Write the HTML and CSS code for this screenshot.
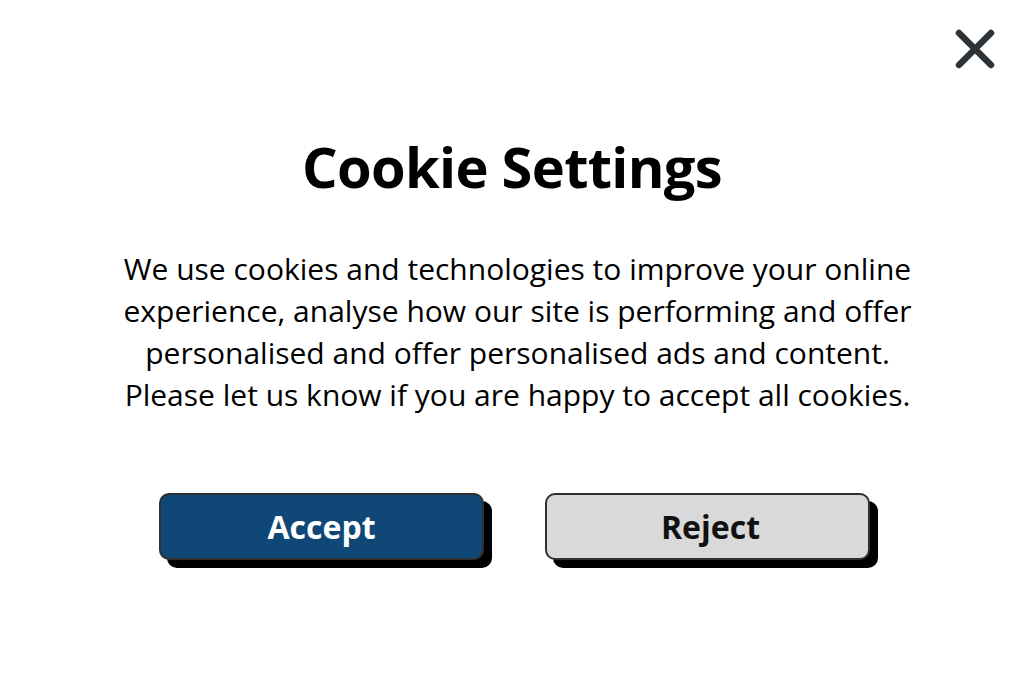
FILE: index.html
```html
<!DOCTYPE html>
<html lang="en">
<head>
<meta charset="utf-8">
<title>Cookie Settings</title>
<link rel="stylesheet" href="styles.css">
</head>
<body>
<div class="dialog">
  <button class="close" aria-label="Close">
    <svg width="40" height="40" viewBox="0 0 40 40"><path d="M4 4 L36 36 M36 4 L4 36" stroke="#2d3236" stroke-width="6.5" stroke-linecap="round" fill="none"/></svg>
  </button>
  <h1 class="title">Cookie Settings</h1>
  <p class="text">We use cookies and technologies to improve your online experience, analyse how our site is performing and offer personalised and offer personalised ads and content. Please let us know if you are happy to accept all cookies.</p>
  <div class="actions">
    <button class="btn btn-accept">Accept</button>
    <button class="btn btn-reject">Reject</button>
  </div>
</div>
</body>
</html>
```
FILE: styles.css
```css
html, body {
  margin: 0;
  padding: 0;
  background: #ffffff;
}
body {
  font-family: "Open Sans", "Liberation Sans", sans-serif;
  color: #000;
}
.dialog {
  position: relative;
  width: 1024px;
  height: 683px;
  display: flex;
  flex-direction: column;
  align-items: center;
  box-sizing: border-box;
  padding-top: 128px;
}
.close {
  position: absolute;
  top: 29px;
  right: 29px;
  width: 40px;
  height: 40px;
  padding: 0;
  border: 0;
  background: none;
  display: flex;
}
.title {
  margin: 0;
  font-size: 56px;
  font-weight: 700;
  line-height: 76px;
  letter-spacing: -0.7px;
}
.text {
  margin: 44px 0 0 11px;
  width: 800px;
  text-align: center;
  font-size: 30px;
  line-height: 42px;
}
.actions {
  margin-top: 77px;
  display: flex;
  gap: 61px;
  padding-left: 5px;
}
.btn {
  width: 325px;
  height: 67px;
  border: 2px solid #2f2f2f;
  border-radius: 10px;
  box-shadow: 8px 8px 0 #000;
  font-family: "Open Sans", "Liberation Sans", sans-serif;
  font-weight: 700;
  font-size: 32px;
  padding: 0;
}
.btn-accept {
  background: #0f4777;
  color: #fff;
}
.btn-reject {
  background: #d9d9d9;
  color: #111;
  padding-left: 6px;
}
```
